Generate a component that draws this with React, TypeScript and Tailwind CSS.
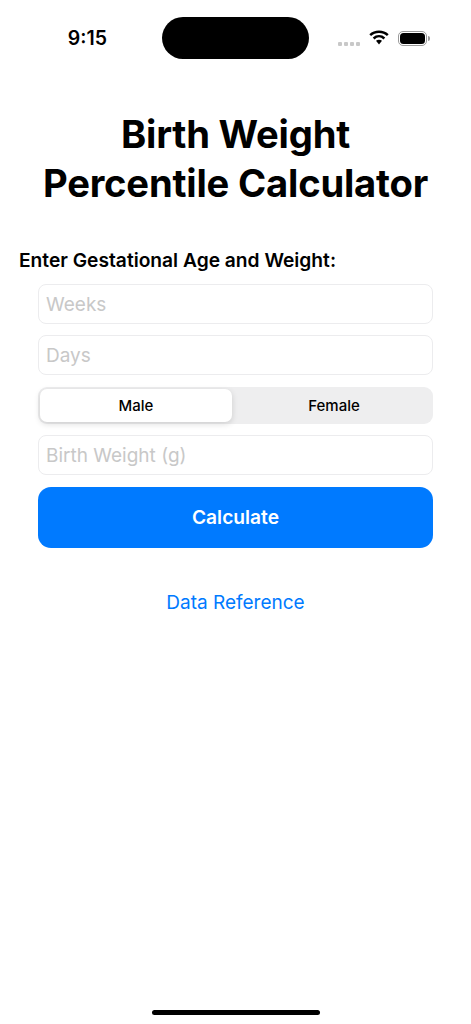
import { useState } from "react";

const font = "font-['Inter','Noto_Sans',sans-serif]";

const StatusBar = () => (
  <div className="h-[60px] pt-[17px] flex items-start">
    <div className="w-[162px] h-[42px] flex items-center justify-end pr-[55px] pt-[1px]">
      <span className="text-[19.500px] font-semibold leading-none text-black">9:15</span>
    </div>
    <div className="w-[147px] h-[42px] rounded-full bg-black" />
    <div className="flex-1 h-[42px] flex items-center pl-[29px]">
      {/* hidden cellular signal */}
      <div className="flex gap-[2px] mt-[11px]">
        <div className="w-[4px] h-[4px] rounded-[1px] bg-[#c8c8c8]" />
        <div className="w-[4px] h-[4px] rounded-[1px] bg-[#c8c8c8]" />
        <div className="w-[4px] h-[4px] rounded-[1px] bg-[#c8c8c8]" />
        <div className="w-[4px] h-[4px] rounded-[1px] bg-[#c8c8c8]" />
      </div>
      <svg className="ml-[9px] mb-[1px]" width="20" height="15" viewBox="0 0 20 15" fill="none">
        <path d="M1.2 5.2C6 .7 14 .7 18.800 5.200" stroke="#000" strokeWidth="2.500" />
        <path d="M4.600 8.500C7.800 5.600 12.200 5.600 15.400 8.500" stroke="#000" strokeWidth="2.500" />
        <path d="M7 10.800 10 14.500 13 10.800C11.200 9.300 8.800 9.300 7 10.800Z" fill="#000" />
      </svg>
      <div className="ml-[9px] flex items-center">
        <div className="w-[29px] h-[15px] rounded-[5px] border border-[#9a9a9a] p-[1px]">
          <div className="w-full h-full rounded-[3.500px] bg-black" />
        </div>
        <div className="w-[1.500px] h-[5px] rounded-r-sm bg-[#9a9a9a] ml-[1px]" />
      </div>
    </div>
  </div>
);

const Field = ({ placeholder }: { placeholder: string }) => (
  <input
    placeholder={placeholder}
    className="w-full h-[40px] px-[7px] bg-white rounded-[8px] border border-[#ececee] text-[19px] text-black placeholder:text-[#c8c8c8] outline-none"
  />
);

const App = () => {
  const [sex, setSex] = useState("Male");

  return (
    <div className={`relative w-[471px] h-[1024px] bg-white overflow-hidden ${font}`}>
      <StatusBar />

      <h1 className="mt-[50px] text-center text-[38.200px] leading-[49px] font-bold text-black tracking-[-0.2px]">
        Birth Weight
        <br />
        Percentile Calculator
      </h1>

      <p className="mt-[40px] ml-[19px] text-[19.200px] leading-[24px] font-semibold text-black">
        Enter Gestational Age and Weight:
      </p>

      <div className="mt-[12px] ml-[38px] w-[395px] flex flex-col">
        <Field placeholder="Weeks" />
        <div className="mt-[11px]">
          <Field placeholder="Days" />
        </div>

        {/* Male / Female picker */}
        <div className="mt-[12px] h-[37px] p-[2px] rounded-[9px] bg-[#eeeeef] flex">
          {["Male", "Female"].map((s) => (
            <button
              key={s}
              onClick={() => setSex(s)}
              className={`rounded-[7px] pt-[1px] text-[15px] font-medium text-black ${
                s === "Male" ? "w-[192px]" : "flex-1 pl-[5px]"
              } ${s === sex ? "bg-white shadow-[0_2px_6px_rgba(0,0,0,0.14)]" : ""}`}
            >
              {s}
            </button>
          ))}
        </div>

        <div className="mt-[11px]">
          <Field placeholder="Birth Weight (g)" />
        </div>

        <button className="mt-[12px] h-[61px] rounded-[13px] bg-[#007aff] text-white text-[19.200px] font-semibold">
          Calculate
        </button>
      </div>

      <div className="mt-[43px] text-center text-[19px] leading-[24px] text-[#007aff]">Data Reference</div>

      {/* home indicator */}
      <div className="absolute bottom-[9px] left-[152px] w-[168px] h-[5px] rounded-full bg-black" />
    </div>
  );
};

export default App;
